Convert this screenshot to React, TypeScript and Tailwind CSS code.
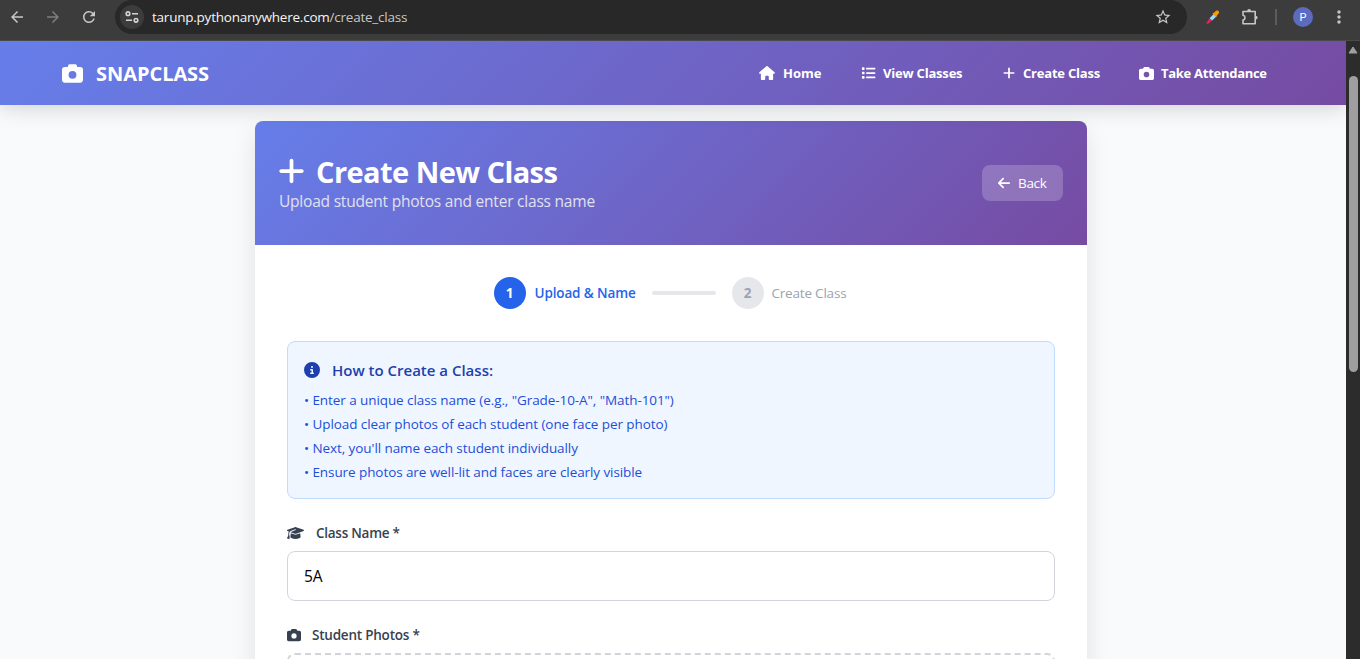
import React from "react";
import { FaArrowLeft, FaCamera, FaCircleInfo, FaGraduationCap, FaHouse, FaList, FaPlus } from "react-icons/fa6";
import { MdArrowBack, MdArrowForward, MdMoreVert, MdRefresh, MdStarBorder } from "react-icons/md";

function BrowserBar() {
  return (
    <div className="flex h-[41px] shrink-0 items-start border-b border-[#4a4a4a] bg-[#3c3c3c] text-[#c7c7c7]">
      <div className="flex h-[34px] w-[115px] shrink-0 items-center gap-[18px] pl-2">
        <MdArrowBack className="size-[18px]" />
        <MdArrowForward className="size-[18px] text-[#7d7d7d]" />
        <MdRefresh className="size-[18px]" />
      </div>
      <div className="flex h-[34px] w-[1072px] shrink-0 items-center rounded-full bg-[#282828] pl-[5px] pr-[15px]">
        <div className="flex size-6 items-center justify-center rounded-full bg-[#3c3c3c]">
          <svg viewBox="0 0 14 12" className="h-3 w-3.5" fill="none" stroke="#d4d4d4" strokeWidth="1.6">
            <circle cx="3" cy="2.7" r="1.8" />
            <path d="M7 2.7h6M1 9.3h6" />
            <circle cx="11" cy="9.3" r="1.8" />
          </svg>
        </div>
        <div className="ml-2 grow font-['Open_Sans',sans-serif] text-[13.5px] leading-5 tracking-[-0.23px] text-[#c7c7c7]">
          <span className="text-[#f5f5f5]">tarunp.pythonanywhere.com</span>/create_class
        </div>
        <MdStarBorder className="size-[18px]" />
      </div>
      <div className="flex h-[34px] grow items-center">
        <svg viewBox="0 0 16 16" className="ml-[18px] size-4">
          <path d="M1.6 13.4 4.6 9.200l2.600 2.300-3.600 2.900c-1.400.9-2.800.2-2-1z" fill="#e91e63" />
          <path d="m4.600 9.200 4-4.300 2.700 2.600-4.100 4z" fill="#9fd8ff" />
          <path d="m7.400 4.300 1.500-.5 2.200-2c1.800-1.200 3.800.7 2.700 2.500l-1.800 2.200-.7 1.700z" fill="#ff9800" />
        </svg>
        <svg viewBox="0 0 18 18" className="ml-[20px] size-[18px]" fill="none" stroke="#c7c7c7" strokeWidth="1.6">
          <path d="M2 3.500h12.200v12.200H2v-3.600a2.500 2.500 0 0 0 0-4.900z" strokeLinejoin="round" />
          <path d="M6.200 3a1.900 1.900 0 0 1 3.800 0zM14.700 7.700a1.900 1.900 0 0 1 0 3.800z" fill="#c7c7c7" stroke="none" />
        </svg>
        <div className="ml-[16px] h-4 w-0.5 bg-[#5c5c5c]" />
        <div className="ml-4 flex size-5 items-center justify-center rounded-full bg-[#5c6bc0] pt-0.5 font-['Roboto',sans-serif] text-[11px] text-white">P</div>
        <MdMoreVert className="ml-4 size-5" />
      </div>
    </div>
  );
}

function NavBar() {
  return (
    <nav className="z-10 flex h-16 shrink-0 items-center justify-between bg-[linear-gradient(135deg,#667eea_0%,#764ba2_100%)] pl-[62px] pr-[78px] text-white shadow-[0_4px_20px_rgba(0,0,0,0.15)]">
      <div className="flex items-center">
        <FaCamera className="size-[21px]" />
        <span className="ml-[13px] pt-0.5 text-[20px] font-bold leading-7 tracking-[-0.05px]">SNAPCLASS</span>
      </div>
      <div className="flex items-center text-[13px] font-bold leading-5 tracking-[-0.2px]">
        <a className="flex w-[102px] items-center">
          <FaHouse className="h-[14px] w-[16px]" />
          <span className="ml-2 tracking-[0px]">Home</span>
        </a>
        <a className="flex w-[142px] items-center">
          <FaList className="h-[14px] w-[15px]" />
          <span className="ml-[7px]">View Classes</span>
        </a>
        <a className="flex w-[136px] items-center">
          <FaPlus className="h-[14px] w-[12px]" />
          <span className="ml-2">Create Class</span>
        </a>
        <a className="flex w-[129px] items-center">
          <FaCamera className="size-[15px]" />
          <span className="ml-[7px] whitespace-nowrap tracking-[-0.28px]">Take Attendance</span>
        </a>
      </div>
    </nav>
  );
}

function Stepper() {
  return (
    <div className="flex h-8 items-center justify-center text-[13.5px] leading-5">
      <div className="flex size-8 items-center justify-center rounded-full bg-[#2563eb] font-bold text-white">1</div>
      <span className="ml-[9px] w-[101px] whitespace-nowrap font-semibold tracking-[-0.13px] text-[#2563eb]">Upload &amp; Name</span>
      <div className="mx-4 h-1 w-16 rounded-full bg-[#e5e7eb]" />
      <div className="flex size-8 items-center justify-center rounded-full bg-[#e5e7eb] font-bold text-[#9ca3af]">2</div>
      <span className="ml-2 w-[77px] whitespace-nowrap tracking-[-0.2px] text-[#9ca3af]">Create Class</span>
    </div>
  );
}

const tips = [
  'Enter a unique class name (e.g., "Grade-10-A", "Math-101")',
  "Upload clear photos of each student (one face per photo)",
  "Next, you'll name each student individually",
  "Ensure photos are well-lit and faces are clearly visible",
];

function Instructions() {
  return (
    <div className="mt-8 rounded-lg border border-[#bfdbfe] bg-[#eff6ff] p-4">
      <h3 className="flex h-6 items-center text-[15px] font-semibold text-[#1e40af]">
        <FaCircleInfo className="size-4" />
        <span className="ml-[12px] tracking-[0px]">How to Create a Class:</span>
      </h3>
      <ul className="mt-2 flex flex-col gap-1 text-[13.5px] leading-5 tracking-[-0.08px] text-[#1d4ed8]">
        {tips.map((tip) => (
          <li key={tip}>• {tip}</li>
        ))}
      </ul>
    </div>
  );
}

export default function App() {
  return (
    <div className="flex h-[659px] w-[1360px] flex-col overflow-hidden font-['Open_Sans',sans-serif]">
      <BrowserBar />
      <div className="flex min-h-0 grow">
        <div className="flex w-[1346px] shrink-0 flex-col overflow-hidden bg-[#f8fafc]">
          <NavBar />
          <main className="ml-[255px] mt-4 w-[832px] shrink-0 rounded-lg bg-white shadow-[0_10px_25px_rgba(0,0,0,0.1)]">
            <header className="flex h-[124px] items-center justify-between rounded-t-lg bg-[linear-gradient(135deg,#667eea_0%,#764ba2_100%)] px-6 text-white">
              <div>
                <h1 className="flex h-9 items-center text-[29px] font-bold tracking-[-0.56px]">
                  <FaPlus className="-ml-px h-[30px] w-[27px]" />
                  <span className="ml-[11px] pt-0.5 leading-9">Create New Class</span>
                </h1>
                <p className="text-[15.5px] leading-6 tracking-[-0.21px] text-[#e0e1ee]">Upload student photos and enter class name</p>
              </div>
              <button className="flex h-9 w-[81px] items-center rounded-lg bg-white/20 pl-[15px] text-[13.5px] font-normal">
                <FaArrowLeft className="size-[14px]" />
                <span className="ml-[7px] tracking-[-0.3px]">Back</span>
              </button>
            </header>
            <div className="p-8">
              <Stepper />
              <Instructions />
              <label className="mt-6 flex h-5 items-center text-[13.5px] font-semibold text-[#374151]">
                <FaGraduationCap className="h-[14px] w-[17px]" />
                <span className="ml-[12px] tracking-[-0.26px]">Class Name *</span>
              </label>
              <input
                className="mt-2 block h-[50px] w-full rounded-lg border border-[#d1d5db] bg-white px-4 text-[15.5px] text-black outline-none"
                defaultValue="5A"
              />
              <label className="mt-6 flex h-5 items-center text-[13.5px] font-semibold text-[#374151]">
                <FaCamera className="size-[14px]" />
                <span className="ml-[11px] tracking-[-0.22px]">Student Photos *</span>
              </label>
              <div className="mt-2 h-48 rounded-lg border-2 border-dashed border-[#d1d5db]" />
            </div>
          </main>
        </div>
        <div className="flex w-[14px] flex-col items-center bg-[#2c2c2c]">
          <svg viewBox="0 0 10 8" className="mt-[5px] h-2 w-[10px]">
            <path d="M5 1 9 7H1z" fill="#9f9f9f" stroke="#9f9f9f" strokeLinejoin="round" />
          </svg>
          <div className="mt-[22px] h-[296px] w-[9px] rounded-full bg-[#9f9f9f]" />
        </div>
      </div>
    </div>
  );
}
